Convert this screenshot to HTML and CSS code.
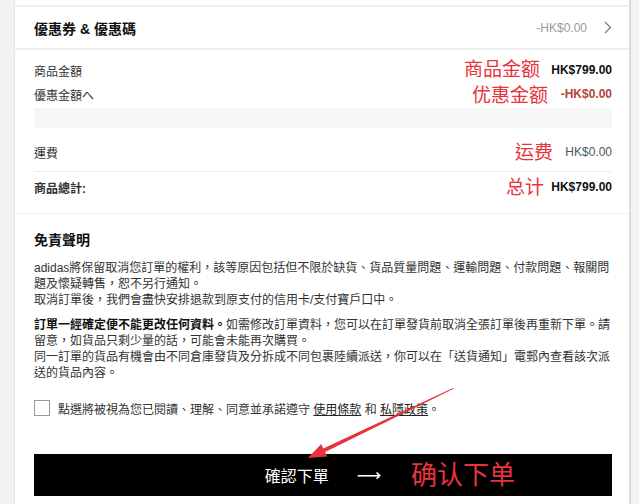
FILE: index.html
```html
<!DOCTYPE html>
<html lang="zh-Hant">
<head>
<meta charset="utf-8">
<title>確認下單</title>
<link rel="stylesheet" href="styles.css">
</head>
<body>
<div class="card">
  <div class="prev"></div>
  <div class="coupon">
    <span class="title">優惠券 &amp; 優惠碼</span>
    <span class="coupon-right">
      <span class="muted">-HK$0.00</span>
      <svg class="chev" width="8" height="13" viewBox="0 0 8 13"><path d="M1 1 L6.5 6.5 L1 12" fill="none" stroke="#777" stroke-width="1.1"/></svg>
    </span>
  </div>
  <div class="summary">
    <div class="row"><span>商品金額</span><span class="amt bold">HK$799.00</span></div>
    <div class="row"><span>優惠金額へ</span><span class="amt bold red">-HK$0.00</span></div>
    <div class="graybar"></div>
    <div class="row ship"><span>運費</span><span class="amt slate">HK$0.00</span></div>
    <div class="row total"><span class="bold">商品總計:</span><span class="amt bold">HK$799.00</span></div>
  </div>
  <div class="disclaimer">
    <div class="title">免責聲明</div>
    <p class="para">adidas將保留取消您訂單的權利，該等原因包括但不限於缺貨、貨品質量問題、運輸問題、付款問題、報關問<br>題及懷疑轉售，恕不另行通知。<br>取消訂單後，我們會盡快安排退款到原支付的信用卡/支付寶戶口中。</p>
    <p class="para para2"><b>訂單一經確定便不能更改任何資料。</b>如需修改訂單資料，您可以在訂單發貨前取消全張訂單後再重新下單。請<br>留意，如貨品只剩少量的話，可能會未能再次購買。<br>同一訂單的貨品有機會由不同倉庫發貨及分拆成不同包裹陸續派送，你可以在「送貨通知」電郵內查看該次派<br>送的貨品內容。</p>
    <label class="agree"><span class="box"></span><span>點選將被視為您已閱讀、理解、同意並承諾遵守 <u>使用條款</u> 和 <u>私隱政策</u>。</span></label>
    <div class="btn"><span>確認下單</span><span class="arrow">⟶</span></div>
  </div>

  <span class="note n1">商品金额</span>
  <span class="note n2">优惠金额</span>
  <span class="note n3">运费</span>
  <span class="note n4">总计</span>
  <span class="note n5">确认下单</span>
</div>
<svg class="overlay" width="639" height="504" viewBox="0 0 639 504">
  <polygon points="453,388 323.3,448.4 321.2,443.9 308,458 327.2,456.5 325.1,452 453.6,388.8" fill="#e8333c"/>
</svg>
</body>
</html>
```

FILE: styles.css
```css
html, body {
  margin: 0;
  padding: 0;
}
body {
  background: #f2f2f2;
  width: 639px;
  height: 504px;
  overflow: hidden;
  position: relative;
  font-family: "Liberation Sans", "Noto Sans CJK TC", sans-serif;
  font-size: 12px;
  color: #333;
}
.card {
  position: relative;
  margin-left: 14px;
  width: 617px;
  height: 504px;
  background: #fff;
  border-left: 1px solid #e6e6e6;
  border-right: 2px solid #dcdcdc;
  box-sizing: border-box;
}
.prev {
  height: 5px;
  border-bottom: 2px solid #efefef;
}
.coupon {
  height: 41px;
  display: flex;
  align-items: center;
  justify-content: space-between;
  padding: 0 17px 0 19px;
  border-bottom: 2px solid #f0f0f0;
}
.title {
  font-size: 14px;
  font-weight: bold;
  color: #111;
}
.coupon-right {
  display: flex;
  align-items: center;
  gap: 17px;
}
.muted {
  color: #9a9a9a;
}
.chev {
  display: block;
}
.summary {
  padding: 8px 17px 14px 19px;
  border-bottom: 1px solid #eeeeee;
}
.row {
  display: flex;
  justify-content: space-between;
  align-items: center;
  height: 24px;
}
.bold {
  font-weight: bold;
}
.amt.bold {
  color: #111;
}
.amt.red {
  color: #b8423c;
}
.slate {
  color: #4b5862;
}
.graybar {
  margin-top: 2px;
  height: 20px;
  background: #f6f6f6;
}
.ship {
  margin-top: 12px;
  padding-bottom: 7px;
  border-bottom: 1px solid #ececec;
  box-sizing: content-box;
}
.total {
  margin-top: 3px;
}
.disclaimer {
  padding: 16px 17px 0 19px;
}
.disclaimer .title {
  display: block;
  line-height: 20px;
}
.para {
  margin: 10px 0 0;
  line-height: 16px;
  color: #333;
  white-space: nowrap;
}
.para2 {
  margin-top: 9px;
}
.para b {
  color: #111;
}
.agree {
  margin-top: 19px;
  display: flex;
  align-items: center;
  gap: 8px;
  height: 16px;
}
.box {
  width: 14px;
  height: 14px;
  border: 1px solid #999;
  background: #fff;
  flex: none;
}
.agree u {
  color: #222;
}
.btn {
  margin-top: 38px;
  height: 42px;
  background: #000;
  color: #fff;
  display: flex;
  align-items: center;
  justify-content: center;
  gap: 28px;
  font-size: 16px;
}
.arrow {
  font-family: "DejaVu Sans", sans-serif;
  font-size: 17px;
}
.note {
  position: absolute;
  font-family: "Noto Sans CJK SC", sans-serif;
  color: #e8333c;
  font-size: 19px;
  line-height: 22px;
  white-space: nowrap;
}
.n1 { left: 449px; top: 57px; }
.n2 { left: 457px; top: 83px; }
.n3 { left: 500px; top: 140px; }
.n4 { left: 491px; top: 175px; }
.n5 { left: 396px; top: 459px; font-size: 26px; line-height: 28px; }
.overlay {
  position: absolute;
  left: 0;
  top: 0;
  pointer-events: none;
}
```
